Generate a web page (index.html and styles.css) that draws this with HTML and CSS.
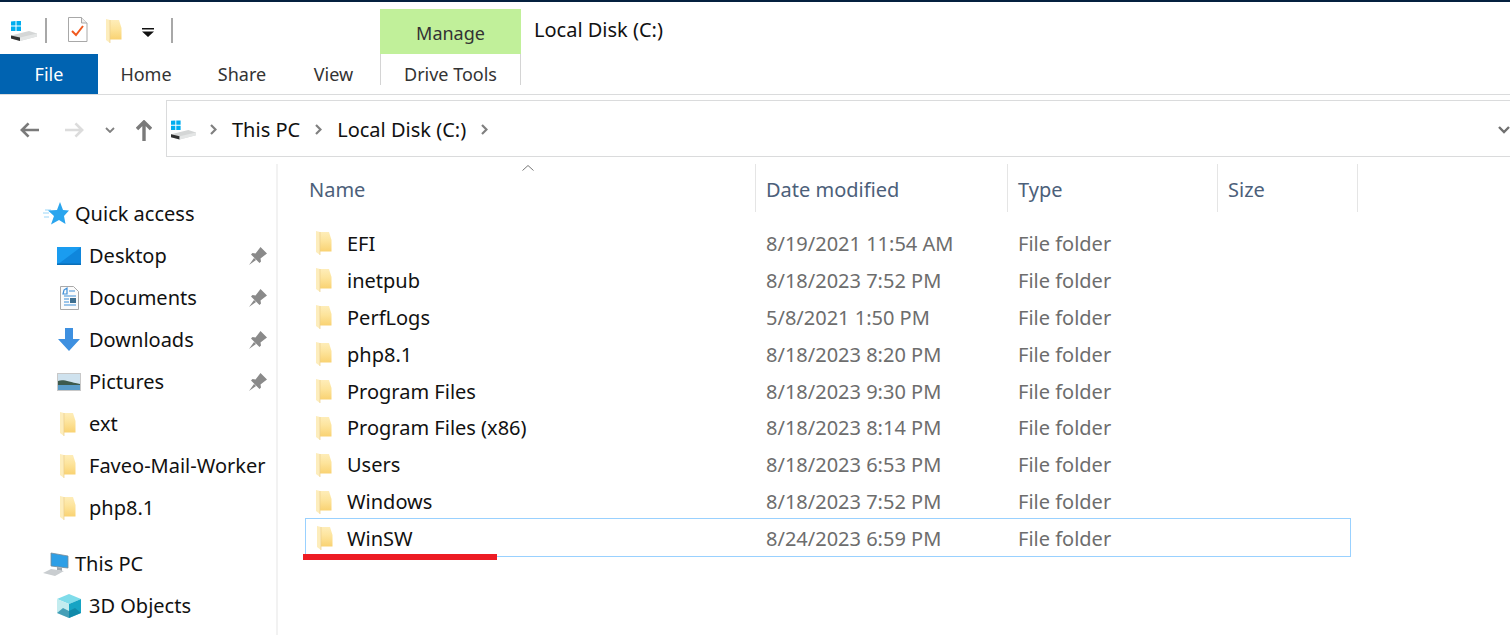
FILE: index.html
```html
<!DOCTYPE html>
<html lang="en">
<head>
    <meta charset="UTF-8">
    <title>Local Disk (C:)</title>
    <link rel="stylesheet" href="styles.css">
</head>
<body>
    <svg class="defs" width="0" height="0">
        <defs>
            <linearGradient id="folder-body" x1="0" y1="0" x2="0" y2="1">
                <stop offset="0" stop-color="#feedb9"/>
                <stop offset=".45" stop-color="#fde49c"/>
                <stop offset="1" stop-color="#f9d272"/>
            </linearGradient>
        </defs>
        <symbol id="folder" viewBox="0 0 16 24">
            <path d="M4 1h9l2.500 8v11.500H4z" fill="url(#folder-body)"/>
            <path d="M0 0l4 1v23l-4-3z" fill="#fdedbc"/>
            <path d="M4 1v23" stroke="#e9cd8c" stroke-width=".7"/>
        </symbol>
        <symbol id="drive" viewBox="0 0 26 20">
            <path d="M0 14.500L18 10l8 2.500v3L9 20 0 17.500z" fill="#d4d6d6"/>
            <path d="M0 14.500L9 16.500V20L0 17.500z" fill="#2f2f2f"/>
            <path d="M9 16.500l17-4v3L9 20z" fill="#e4e6e6"/>
            <path d="M0 .500l4.500-.500v4.500H0zM5.500 0L10 0v4.500H5.500zM0 5.500h4.500V10H0zM5.500 5.500H10V10H5.500z" fill="#00adef"/>
        </symbol>
        <symbol id="pin" viewBox="0 0 18 18">
            <path d="M11.500 0L18 6.500 16 8l-4.500 3.500.500 3-1.500 1.500L2 7.500 3.500 6l3 .500L10 2zM5 11l2 2-7 5z" fill="#8a8a8a"/>
        </symbol>
    </svg>

    <div class="titlebar"></div>

    <header class="qat">
        <svg class="qat-drive"><use href="#drive"/></svg>
        <span class="qat-sep"></span>
        <svg class="qat-props" viewBox="0 0 20 25">
            <path d="M.500.500h13l5.500 5.500v18.500H.500z" fill="#fff" stroke="#a8a8a8"/>
            <path d="M13.500.500V6H19" fill="#eee" stroke="#a8a8a8"/>
            <path d="M4 14l4 4 7-9" fill="none" stroke="#f0591e" stroke-width="2"/>
        </svg>
        <svg class="qat-folder"><use href="#folder"/></svg>
        <svg class="qat-drop" viewBox="0 0 12 9">
            <path d="M0 0h12v1.500H0zM0 3.500h12L6 9z" fill="#111"/>
        </svg>
        <span class="qat-sep qat-sep-last"></span>
        <div class="manage">Manage</div>
        <div class="window-title">Local Disk (C:)</div>
    </header>

    <nav class="tabs">
        <div class="tab tab-file">File</div>
        <div class="tab tab-home">Home</div>
        <div class="tab tab-share">Share</div>
        <div class="tab tab-view">View</div>
        <div class="tab tab-drive">Drive Tools</div>
    </nav>

    <div class="addressrow">
        <div class="navbtns">
            <svg class="nav-back" viewBox="0 0 20 16"><path d="M9 1L2 8l7 7M2 8h18" fill="none" stroke="#7a7a7a" stroke-width="2.800"/></svg>
            <svg class="nav-fwd" viewBox="0 0 20 16"><path d="M11 1l7 7-7 7M18 8H0" fill="none" stroke="#dcdcdc" stroke-width="2.800"/></svg>
            <svg class="nav-recent" viewBox="0 0 10 6"><path d="M1 1l4 4 4-4" fill="none" stroke="#808080" stroke-width="1.800"/></svg>
            <svg class="nav-up" viewBox="0 0 16 21"><path d="M1 9l7-7 7 7M8 2v19" fill="none" stroke="#7a7a7a" stroke-width="3.400"/></svg>
        </div>
        <div class="addressbox">
            <svg class="addr-drive"><use href="#drive"/></svg>
            <svg class="crumb-sep" viewBox="0 0 7 11"><path d="M1 1l4.500 4.500L1 10" fill="none" stroke="#808080" stroke-width="2.200"/></svg>
            <span class="crumb">This PC</span>
            <svg class="crumb-sep" viewBox="0 0 7 11"><path d="M1 1l4.500 4.500L1 10" fill="none" stroke="#808080" stroke-width="2.200"/></svg>
            <span class="crumb">Local Disk (C:)</span>
            <svg class="crumb-sep" viewBox="0 0 7 11"><path d="M1 1l4.500 4.500L1 10" fill="none" stroke="#808080" stroke-width="2.200"/></svg>
            <svg class="addr-drop" viewBox="0 0 12 8"><path d="M1 1l5 5 5-5" fill="none" stroke="#707070" stroke-width="2.400"/></svg>
        </div>
    </div>

    <main class="main">
        <aside class="sidebar">
            <div class="nav-item nav-top">
                <svg class="ico-top" viewBox="0 0 26 24">
                    <path d="M0 11h6M2 8h6M1 15h5" stroke="#9bd6f8" stroke-width="1"/>
                    <path d="M17 0l3 8 6 .500-5 5.500 1.500 8-6.500-4-8 4.500 3-8.500L5 8.500l9-.500z" fill="#2aa5ee"/>
                </svg>
                <span>Quick access</span>
            </div>
            <div class="nav-item">
                <svg class="ico" viewBox="0 0 24 18">
                    <rect width="24" height="18" fill="#1a9cf0"/>
                    <path d="M0 18L24 0v18z" fill="#0f86dc"/>
                    <rect y="16.500" width="24" height="1.500" fill="#0b6fb8"/>
                </svg>
                <span>Desktop</span>
                <svg class="pin"><use href="#pin"/></svg>
            </div>
            <div class="nav-item">
                <svg class="ico" viewBox="0 0 24 24">
                    <path d="M3.500.500h13l5 5v18h-18z" fill="#fbfbfb" stroke="#a9a9a9"/>
                    <path d="M7 4l3-2v6H6zM12 5h6M7 10h12M7 13h5M7 16h5M7 19h12" fill="none" stroke="#3f8fd8" stroke-width="1.200"/>
                    <rect x="13" y="12" width="6" height="5" fill="#3f6f8f"/>
                </svg>
                <span>Documents</span>
                <svg class="pin"><use href="#pin"/></svg>
            </div>
            <div class="nav-item">
                <svg class="ico" viewBox="0 0 24 24">
                    <path d="M8 0h8v11h7L12 23 1 11h7z" fill="#3e90e0"/>
                </svg>
                <span>Downloads</span>
                <svg class="pin"><use href="#pin"/></svg>
            </div>
            <div class="nav-item">
                <svg class="ico" viewBox="0 0 24 18">
                    <rect width="24" height="18" fill="#c8c8c8"/>
                    <rect x="1" y="1" width="22" height="16" fill="#cfe2ee"/>
                    <path d="M1 8c6-2 10 1 22 3v2H1z" fill="#3d5a4c"/>
                    <path d="M1 12h22v5H1z" fill="#5a9cc8"/>
                </svg>
                <span>Pictures</span>
                <svg class="pin"><use href="#pin"/></svg>
            </div>
            <div class="nav-item">
                <svg class="ico ico-folder"><use href="#folder"/></svg>
                <span>ext</span>
            </div>
            <div class="nav-item">
                <svg class="ico ico-folder"><use href="#folder"/></svg>
                <span>Faveo-Mail-Worker</span>
            </div>
            <div class="nav-item">
                <svg class="ico ico-folder"><use href="#folder"/></svg>
                <span>php8.1</span>
            </div>
            <div class="nav-item nav-top nav-gap">
                <svg class="ico-top" viewBox="0 0 26 24">
                    <path d="M8 1l17 3v12L8 14z" fill="#2e9fe6" stroke="#7a8a96" stroke-width=".8"/>
                    <path d="M14 15l5 1v3l-5-1z" fill="#a0a8ae"/>
                    <path d="M0 21l8-4 13 2-9 5z" fill="#c9cdd0"/>
                </svg>
                <span>This PC</span>
            </div>
            <div class="nav-item">
                <svg class="ico" viewBox="0 0 24 24">
                    <path d="M12 0l12 5-12 5L0 5z" fill="#7fdcea"/>
                    <path d="M0 5l12 5v14L0 19z" fill="#c3ecef"/>
                    <path d="M24 5l-12 5v14l12-5z" fill="#16a4c4"/>
                    <path d="M0 19l6-5 6 3 6-3 6 5-12 5z" fill="#0f7f9f" opacity=".7"/>
                </svg>
                <span>3D Objects</span>
            </div>
        </aside>

        <section class="files">
            <svg class="sort-caret" viewBox="0 0 12 6"><path d="M.500 5.500L6 .500l5.500 5" fill="none" stroke="#777" stroke-width="1"/></svg>
            <div class="cols">
                <div class="col col-name">Name</div>
                <div class="col col-date">Date modified</div>
                <div class="col col-type">Type</div>
                <div class="col col-size">Size</div>
            </div>
            <div class="rows">
                <div class="row"><svg class="row-ico"><use href="#folder"/></svg><span class="name">EFI</span><span class="meta">8/19/2021 11:54 AM</span><span class="meta">File folder</span></div>
                <div class="row"><svg class="row-ico"><use href="#folder"/></svg><span class="name">inetpub</span><span class="meta">8/18/2023 7:52 PM</span><span class="meta">File folder</span></div>
                <div class="row"><svg class="row-ico"><use href="#folder"/></svg><span class="name">PerfLogs</span><span class="meta">5/8/2021 1:50 PM</span><span class="meta">File folder</span></div>
                <div class="row"><svg class="row-ico"><use href="#folder"/></svg><span class="name">php8.1</span><span class="meta">8/18/2023 8:20 PM</span><span class="meta">File folder</span></div>
                <div class="row"><svg class="row-ico"><use href="#folder"/></svg><span class="name">Program Files</span><span class="meta">8/18/2023 9:30 PM</span><span class="meta">File folder</span></div>
                <div class="row"><svg class="row-ico"><use href="#folder"/></svg><span class="name">Program Files (x86)</span><span class="meta">8/18/2023 8:14 PM</span><span class="meta">File folder</span></div>
                <div class="row"><svg class="row-ico"><use href="#folder"/></svg><span class="name">Users</span><span class="meta">8/18/2023 6:53 PM</span><span class="meta">File folder</span></div>
                <div class="row"><svg class="row-ico"><use href="#folder"/></svg><span class="name">Windows</span><span class="meta">8/18/2023 7:52 PM</span><span class="meta">File folder</span></div>
                <div class="row row-selected"><svg class="row-ico"><use href="#folder"/></svg><span class="name">WinSW</span><span class="meta">8/24/2023 6:59 PM</span><span class="meta">File folder</span></div>
            </div>
        </section>
    </main>
</body>
</html>
```

FILE: styles.css
```css
* {
    margin: 0;
    padding: 0;
    box-sizing: border-box;
}

body {
    width: 1510px;
    height: 635px;
    overflow: hidden;
    background-color: white;
    color: #111;
    font-family: "Noto Sans", "Liberation Sans", sans-serif;
    font-size: 20px;
}

.defs {
    display: block;
    height: 0;
}

.titlebar {
    height: 2px;
    background-color: #04203f;
}

/* quick access toolbar */
.qat {
    display: flex;
    align-items: center;
    height: 52px;
    padding-left: 11px;
}

.qat-drive {
    width: 26px;
    height: 20px;
    margin-top: 6px;
}

.qat-sep {
    width: 2px;
    height: 25px;
    margin-left: 8px;
    margin-top: 4px;
    background-color: #a8a8a8;
}

.qat-props {
    width: 20px;
    height: 25px;
    margin-left: 21px;
    margin-top: 3px;
}

.qat-folder {
    width: 16px;
    height: 24px;
    margin-left: 18px;
    margin-top: 5px;
}

.qat-drop {
    width: 12px;
    height: 9px;
    margin-left: 20px;
    margin-top: 9px;
}

.qat-sep-last {
    margin-left: 17px;
}

.manage {
    align-self: flex-end;
    width: 141px;
    height: 45px;
    margin-left: 207px;
    background-color: #c1f09a;
    color: #333;
    text-align: center;
    line-height: 49px;
    font-size: 18px;
}

.window-title {
    align-self: flex-start;
    margin-left: 13px;
    margin-top: 14px;
    font-size: 20px;
    line-height: 28px;
}

/* ribbon tabs */
.tabs {
    display: flex;
    height: 41px;
    border-bottom: 1px solid #dadbdc;
    font-size: 18px;
    color: #333;
}

.tab {
    height: 40px;
    line-height: 40px;
    text-align: center;
}

.tab-file {
    width: 98px;
    background-color: #0063b1;
    color: white;
}

.tab-home,
.tab-share {
    width: 96px;
}

.tab-view {
    width: 90px;
    padding-right: 3px;
}

.tab-drive {
    width: 141px;
    height: 31px;
    border-left: 1px solid #d4d4d4;
    border-right: 1px solid #d4d4d4;
}

/* address bar */
.addressrow {
    display: flex;
    align-items: flex-start;
    height: 62px;
}

.navbtns {
    display: flex;
    align-items: center;
    width: 166px;
    height: 61px;
    padding-left: 20px;
    padding-top: 9px;
}

.nav-back {
    width: 19px;
    height: 16px;
}

.nav-fwd {
    width: 19px;
    height: 16px;
    margin-left: 26px;
}

.nav-recent {
    width: 10px;
    height: 6px;
    margin-left: 21px;
}

.nav-up {
    width: 16px;
    height: 21px;
    margin-left: 21px;
}

.addressbox {
    display: flex;
    align-items: center;
    flex: 1;
    height: 57px;
    border: 1px solid #dadbdc;
    border-right: none;
    margin-top: 5px;
    padding-left: 4px;
    padding-top: 2px;
    font-size: 20px;
}

.addr-drive {
    width: 25px;
    height: 20px;
}

.crumb-sep {
    width: 7px;
    height: 11px;
    margin-left: 14px;
}

.crumb {
    margin-left: 15px;
    margin-right: 1px;
}

.addr-drop {
    width: 12px;
    height: 8px;
    margin-left: auto;
}

/* main area */
.main {
    display: flex;
    height: 478px;
}

.sidebar {
    flex: none;
    width: 278px;
    border-right: 2px solid #f2f2f2;
    padding-top: 28.500px;
    margin-top: 7px;
    color: #111;
}

.nav-item {
    display: flex;
    align-items: center;
    height: 42px;
    padding-left: 57px;
}

.nav-top {
    padding-left: 43px;
}

.nav-gap {
    margin-top: 14px;
}

.ico-top {
    flex: none;
    width: 26px;
    height: 24px;
    margin-right: 6px;
}

.ico {
    flex: none;
    width: 24px;
    height: 24px;
    margin-right: 8px;
}

.ico-folder {
    width: 16px;
    margin-left: 3px;
    margin-right: 13px;
}

.pin {
    width: 18px;
    height: 18px;
    margin-left: auto;
    margin-right: 9px;
}

.files {
    position: relative;
    flex: 1;
    padding-left: 27px;
}

.sort-caret {
    position: absolute;
    left: 244px;
    top: 8px;
    width: 12px;
    height: 6px;
}

.cols {
    display: flex;
    height: 48px;
    margin-top: 7px;
    color: #4c607a;
}

.col {
    line-height: 52px;
    border-right: 1px solid #e5e5e5;
}

.col-name {
    width: 451px;
    padding-left: 4px;
}

.col-date {
    width: 252px;
    padding-left: 10px;
}

.col-type {
    width: 210px;
    padding-left: 10px;
}

.col-size {
    width: 140px;
    padding-left: 10px;
}

.rows {
    margin-top: 13px;
    width: 1046px;
}

.row {
    display: grid;
    grid-template-columns: 42px 419px 252px 1fr;
    align-items: center;
    height: 36.900px;
}

.row-ico {
    width: 16px;
    height: 24px;
    margin-left: 11px;
}

.name {
    color: #111;
}

.meta {
    color: #6d6d6d;
}

.row-selected {
    position: relative;
    grid-template-columns: 41px 419px 252px 1fr;
    height: 39px;
    margin-top: -2px;
    padding-top: 1px;
    border: 1px solid #99d1ff;
}

/* red underline drawn over the selected row */
.row-selected::after {
    content: "";
    position: absolute;
    left: -3px;
    top: 35px;
    width: 194px;
    height: 6px;
    background-color: #ed1c24;
}
```
